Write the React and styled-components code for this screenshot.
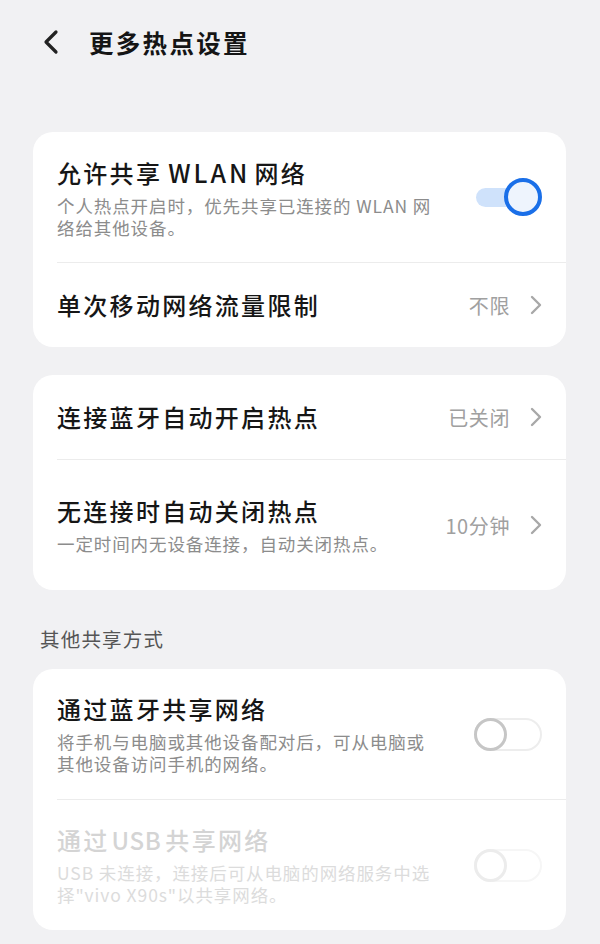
import React from "react";
import styled, { createGlobalStyle } from "styled-components";

const GlobalStyle = createGlobalStyle`
  html, body {
    margin: 0;
    padding: 0;
    background: #f1f1f3;
  }
  body {
    font-family: "Noto Sans CJK SC", "Noto Sans", sans-serif;
    -webkit-font-smoothing: antialiased;
  }
`;

const Page = styled.div`
  width: 600px;
  min-height: 944px;
  background: #f1f1f3;
  padding: 0 34px 0 33px;
  box-sizing: border-box;
`;

const Header = styled.div`
  display: flex;
  align-items: center;
  height: 84px;
  padding-left: 6px;
  margin-bottom: 48px;
`;

const BackButton = styled.div`
  display: flex;
  align-items: center;
  justify-content: center;
  width: 24px;
  height: 30px;
  margin-right: 26px;
`;

const Title = styled.h1`
  margin: 0;
  font-size: 24.5px;
  font-weight: 700;
  color: #151515;
  letter-spacing: 2.3px;
`;

const Card = styled.div`
  background: #ffffff;
  border-radius: 20px;
  margin-bottom: 28px;
  overflow: hidden;
`;

const Row = styled.div`
  display: flex;
  align-items: center;
  justify-content: space-between;
  min-height: ${(p) => (p.$tall ? "130px" : "84px")};
  padding: 0 24px;
  box-sizing: border-box;
`;

const Divider = styled.div`
  height: 1px;
  background: #ececec;
  margin-left: 24px;
`;

const TextBlock = styled.div`
  display: flex;
  flex-direction: column;
  gap: 6px;
`;

const RowTitle = styled.div`
  font-size: 24px;
  line-height: 32px;
  font-weight: 500;
  color: ${(p) => (p.$disabled ? "#d4d4d4" : "#161616")};
  letter-spacing: 2.3px;
  white-space: nowrap;
`;

const Latin = styled.span`
  font-size: ${(p) => (p.$wide ? "25px" : "24px")};
  letter-spacing: ${(p) => (p.$wide ? "3px" : "0.6px")};
  margin: 0 4px 0 ${(p) => (p.$wide ? "6px" : "2px")};
`;

const RowSub = styled.div`
  font-size: 17.5px;
  line-height: 22px;
  color: ${(p) => (p.$disabled ? "#dcdcdc" : "#8c8c8c")};
  letter-spacing: 0.9px;
  white-space: pre-line;
`;

const Value = styled.div`
  display: flex;
  align-items: center;
  gap: 20px;
  font-size: 20px;
  letter-spacing: 0.6px;
  color: #a0a0a0;
  white-space: nowrap;
`;

const SectionLabel = styled.div`
  font-size: 19.5px;
  letter-spacing: 1.2px;
  color: #555555;
  padding-left: 7px;
  line-height: 36px;
  padding-top: 29px;
  box-sizing: border-box;
  height: 77px;
  margin-top: -26px;
`;

const ToggleBox = styled.div`
  position: relative;
  width: 68px;
  height: 40px;
  flex-shrink: 0;
`;

const OnTrack = styled.div`
  position: absolute;
  left: 2px;
  top: 11px;
  width: 52px;
  height: 19px;
  border-radius: 10px;
  background: #cfe2fb;
`;

const OnThumb = styled.div`
  position: absolute;
  right: 0;
  top: 1px;
  width: 38px;
  height: 38px;
  box-sizing: border-box;
  border-radius: 50%;
  border: 4.5px solid #1a6fe8;
  background: #eef4fd;
`;

const OffTrack = styled.div`
  position: absolute;
  left: 0;
  top: 4px;
  width: 68px;
  height: 33px;
  box-sizing: border-box;
  border-radius: 17px;
  border: 2px solid ${(p) => (p.$disabled ? "#f6f6f6" : "#ededed")};
`;

const OffThumb = styled.div`
  position: absolute;
  left: 0;
  top: 4px;
  width: 33px;
  height: 33px;
  box-sizing: border-box;
  border-radius: 50%;
  border: 3.5px solid ${(p) => (p.$disabled ? "#ececec" : "#c6c6c6")};
  background: #ffffff;
`;

const Chevron = ({ color = "#a8a8a8" }) => (
  <svg width="12" height="20" viewBox="0 0 12 20" fill="none">
    <path
      d="M2 2 L10 10 L2 18"
      stroke={color}
      strokeWidth="2.4"
      strokeLinecap="round"
      strokeLinejoin="round"
    />
  </svg>
);

const Toggle = ({ on, disabled }) => (
  <ToggleBox>
    {on ? (
      <>
        <OnTrack />
        <OnThumb />
      </>
    ) : (
      <>
        <OffTrack $disabled={disabled} />
        <OffThumb $disabled={disabled} />
      </>
    )}
  </ToggleBox>
);

function SettingRow({ title, sub, value, toggle, disabled }) {
  return (
    <Row $tall={!!sub}>
      <TextBlock>
        <RowTitle $disabled={disabled}>{title}</RowTitle>
        {sub && <RowSub $disabled={disabled}>{sub}</RowSub>}
      </TextBlock>
      {value && (
        <Value>
          {value}
          <Chevron />
        </Value>
      )}
      {toggle && <Toggle on={toggle === "on"} disabled={disabled} />}
    </Row>
  );
}

export default function App() {
  return (
    <>
      <GlobalStyle />
      <Page>
        <Header>
          <BackButton>
            <svg width="18" height="26" viewBox="0 0 18 26" fill="none">
              <path
                d="M14 3 L4 13 L14 23"
                stroke="#222"
                strokeWidth="3.2"
                strokeLinecap="round"
                strokeLinejoin="round"
              />
            </svg>
          </BackButton>
          <Title>更多热点设置</Title>
        </Header>

        <Card>
          <SettingRow
            title={<>允许共享<Latin $wide>WLAN</Latin>网络</>}
            sub={"个人热点开启时，优先共享已连接的 WLAN 网\n络给其他设备。"}
            toggle="on"
          />
          <Divider />
          <SettingRow title="单次移动网络流量限制" value="不限" />
        </Card>

        <Card>
          <SettingRow title="连接蓝牙自动开启热点" value="已关闭" />
          <Divider />
          <SettingRow
            title="无连接时自动关闭热点"
            sub="一定时间内无设备连接，自动关闭热点。"
            value="10分钟"
          />
        </Card>

        <SectionLabel>其他共享方式</SectionLabel>

        <Card>
          <SettingRow
            title="通过蓝牙共享网络"
            sub={"将手机与电脑或其他设备配对后，可从电脑或\n其他设备访问手机的网络。"}
            toggle="off"
          />
          <Divider />
          <SettingRow
            title={<>通过<Latin>USB</Latin>共享网络</>}
            sub={"USB 未连接，连接后可从电脑的网络服务中选\n择\"vivo X90s\"以共享网络。"}
            toggle="off"
            disabled
          />
        </Card>
      </Page>
    </>
  );
}
